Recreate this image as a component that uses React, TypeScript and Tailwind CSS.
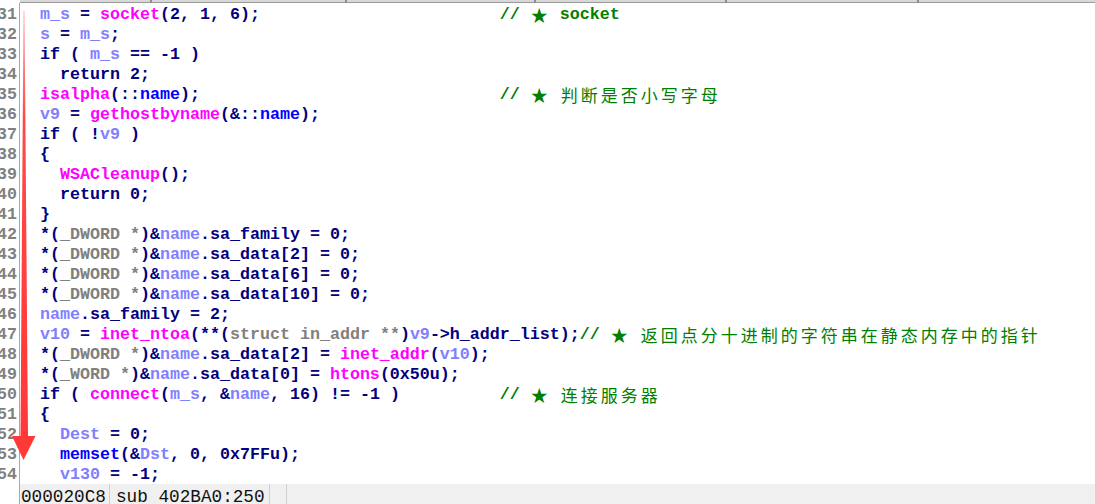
import React from "react";

type Tok = [string, "n" | "v" | "f" | "b" | "g"];

const colors = {
  n: "text-[#000080]",
  v: "text-[#8080ff]",
  f: "text-[#ff00ff]",
  b: "text-[#0000ff]",
  g: "text-[#808080]",
};

type Line = { no: number; toks: Tok[]; comment?: string; col?: number };

const cast = (t: string): Tok[] => [
  ["*(", "n"],
  [t + " *", "g"],
  [")&", "n"],
  ["name", "v"],
];

const lines: Line[] = [
  { no: 31, toks: [["m_s", "v"], [" = ", "n"], ["socket", "f"], ["(2, 1, 6);", "n"]], comment: "// ★ socket", col: 46 },
  { no: 32, toks: [["s", "v"], [" = ", "n"], ["m_s", "v"], [";", "n"]] },
  { no: 33, toks: [["if ( ", "n"], ["m_s", "v"], [" == -1 )", "n"]] },
  { no: 34, toks: [["  return 2;", "n"]] },
  { no: 35, toks: [["isalpha", "f"], ["(::", "n"], ["name", "b"], [");", "n"]], comment: "// ★ 判断是否小写字母", col: 46 },
  { no: 36, toks: [["v9", "v"], [" = ", "n"], ["gethostbyname", "f"], ["(&::", "n"], ["name", "b"], [");", "n"]] },
  { no: 37, toks: [["if ( !", "n"], ["v9", "v"], [" )", "n"]] },
  { no: 38, toks: [["{", "n"]] },
  { no: 39, toks: [["  ", "n"], ["WSACleanup", "f"], ["();", "n"]] },
  { no: 40, toks: [["  return 0;", "n"]] },
  { no: 41, toks: [["}", "n"]] },
  { no: 42, toks: [...cast("_DWORD"), [".sa_family = 0;", "n"]] },
  { no: 43, toks: [...cast("_DWORD"), [".sa_data[2] = 0;", "n"]] },
  { no: 44, toks: [...cast("_DWORD"), [".sa_data[6] = 0;", "n"]] },
  { no: 45, toks: [...cast("_DWORD"), [".sa_data[10] = 0;", "n"]] },
  { no: 46, toks: [["name", "v"], [".sa_family = 2;", "n"]] },
  {
    no: 47,
    toks: [
      ["v10", "v"],
      [" = ", "n"],
      ["inet_ntoa", "f"],
      ["(**(", "n"],
      ["struct in_addr **", "g"],
      [")", "n"],
      ["v9", "v"],
      ["->h_addr_list);", "n"],
    ],
    comment: "// ★ 返回点分十进制的字符串在静态内存中的指针",
  },
  { no: 48, toks: [...cast("_DWORD"), [".sa_data[2] = ", "n"], ["inet_addr", "f"], ["(", "n"], ["v10", "v"], [");", "n"]] },
  { no: 49, toks: [...cast("_WORD"), [".sa_data[0] = ", "n"], ["htons", "f"], ["(0x50u);", "n"]] },
  {
    no: 50,
    toks: [["if ( ", "n"], ["connect", "f"], ["(", "n"], ["m_s", "v"], [", &", "n"], ["name", "v"], [", 16) != -1 )", "n"]],
    comment: "// ★ 连接服务器",
    col: 46,
  },
  { no: 51, toks: [["{", "n"]] },
  { no: 52, toks: [["  ", "n"], ["Dest", "v"], [" = 0;", "n"]] },
  { no: 53, toks: [["  ", "n"], ["memset", "b"], ["(&", "n"], ["Dst", "v"], [", 0, 0x7FFu);", "n"]] },
  { no: 54, toks: [["  ", "n"], ["v130", "v"], [" = -1;", "n"]] },
];

// wide glyphs (★ and CJK) take two columns, like in the IDA view
function Comment({ text }: { text: string }) {
  return (
    <span className="text-[#008000]">
      {Array.from(text).map((ch, i) =>
        ch.charCodeAt(0) > 0x2000 ? (
          <span
            key={i}
            className="inline-block align-top h-[20px] w-[20px] pl-[1px] font-normal text-[17px] leading-[20px] font-['Noto_Sans_CJK_SC',sans-serif]"
          >
            {ch}
          </span>
        ) : (
          <span key={i}>{ch}</span>
        )
      )}
    </span>
  );
}

function CodeLine({ line }: { line: Line }) {
  const len = line.toks.reduce((a, t) => a + t[0].length, 0);
  const pad = line.col && line.col > len ? " ".repeat(line.col - len) : "";
  return (
    <div className="h-[20px] leading-[20px] whitespace-pre overflow-hidden">
      {line.toks.map((t, i) => (
        <span key={i} className={colors[t[1]]}>
          {t[0]}
        </span>
      ))}
      {pad}
      {line.comment && <Comment text={line.comment} />}
    </div>
  );
}

function Arrow() {
  return (
    <svg className="absolute left-0 top-0" width="40" height="484" viewBox="0 0 40 484">
      <defs>
        <linearGradient id="shaft" x1="0" y1="0" x2="0" y2="1">
          <stop offset="0" stopColor="#ffb4b4" />
          <stop offset="0.25" stopColor="#ff4a4a" />
          <stop offset="1" stopColor="#ff3838" />
        </linearGradient>
      </defs>
      <polygon points="23.5,8 24.5,8 28,434 20.5,434" fill="url(#shaft)" />
      <polygon points="12,433 35.5,433 23.5,457" fill="#ff3838" />
    </svg>
  );
}

export default function App() {
  const dividers = [150, 345, 534, 725, 917];
  return (
    <div className="w-[1095px] h-[504px] bg-white overflow-hidden flex flex-col font-['Liberation_Mono',monospace] text-[16.67px] font-bold">
      {/* top strip */}
      <div className="h-[3px] flex shrink-0">
        <div className="w-[20px] shrink-0 bg-white" />
        <div className="relative flex-1 bg-[#d8d8d8] border-b border-[#9a9a9a]">
          {dividers.map((x) => (
            <div key={x} className="absolute top-0 h-[3px] w-[2px] bg-[#8c8c8c]" style={{ left: x - 20 }} />
          ))}
        </div>
      </div>

      {/* code */}
      <div className="relative flex flex-1 overflow-hidden">
        <div className="w-[20px] shrink-0 border-r border-[#a8a8a8] pt-[2px] overflow-hidden">
          {lines.map((l) => (
            <div key={l.no} className="h-[20px] leading-[20px] pr-[2px] text-[#808080] whitespace-pre flex justify-end">
              {l.no}
            </div>
          ))}
        </div>
        <div className="flex-1 pl-[20px] pt-[2px]">
          {lines.map((l) => (
            <CodeLine key={l.no} line={l} />
          ))}
        </div>
        <Arrow />
      </div>

      {/* status bar */}
      <div className="h-[20px] shrink-0 flex">
        <div className="w-[20px] shrink-0 border-r border-[#a8a8a8] bg-white" />
        <div className="flex-1 flex bg-[#f0f0f0] font-normal text-[17.7px] text-[#111]">
          <div className="w-[90px] h-[20px] border-r border-[#d0d0d0] pl-[1px] pt-[6px]">
            <div className="h-[13px] leading-[14px] overflow-hidden whitespace-pre">000020C8</div>
          </div>
          <div className="w-[160px] h-[20px] border-r border-[#d0d0d0] pl-[6px] pt-[6px]">
            <div className="h-[13px] leading-[14px] overflow-hidden whitespace-pre">sub_402BA0:250</div>
          </div>
          <div className="w-[17px] h-[20px] border-r border-[#d0d0d0]" />
        </div>
      </div>
    </div>
  );
}
